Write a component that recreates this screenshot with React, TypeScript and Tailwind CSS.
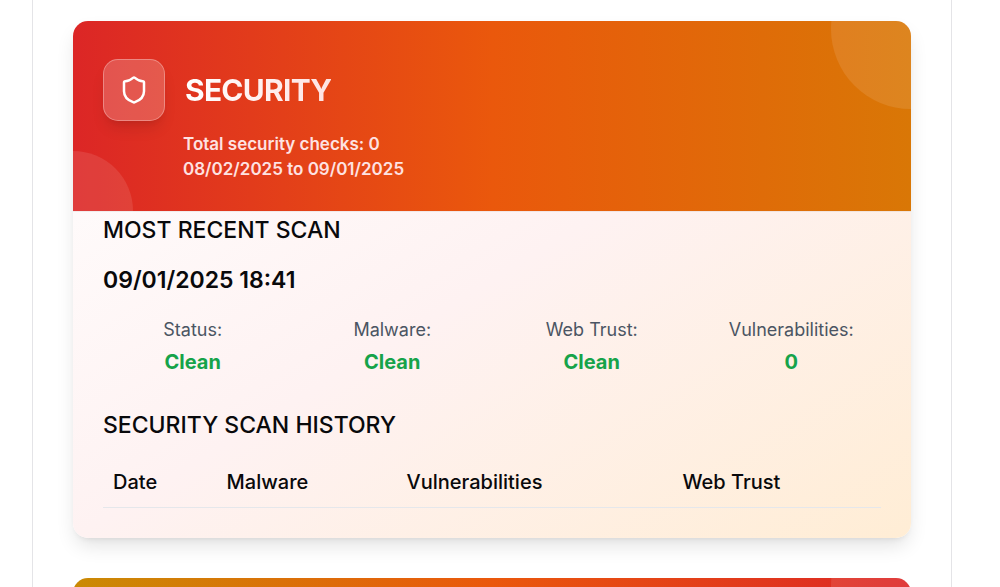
import { Shield } from 'lucide-react';

const results = [
  { label: 'Status:', value: 'Clean' },
  { label: 'Malware:', value: 'Clean' },
  { label: 'Web Trust:', value: 'Clean' },
  { label: 'Vulnerabilities:', value: '0' },
];

const columns = ['Date', 'Malware', 'Vulnerabilities', 'Web Trust'];

function SecurityHeader() {
  return (
    <header className="relative overflow-hidden bg-linear-to-r/srgb from-[#dc2626] via-[#ea580c] to-[#d97706] px-[30px] pt-[38px] pb-[29px]">
      <div className="absolute -top-[72px] -right-20 size-40 rounded-full bg-white/10" />
      <div className="absolute -bottom-[60px] -left-[60px] size-[120px] rounded-full bg-white/10" />
      <div className="relative flex items-center gap-5">
        <div className="flex size-[62px] items-center justify-center rounded-[15px] border border-white/30 bg-white/20 shadow-lg">
          <Shield className="size-[30px] text-white" aria-hidden="true" />
        </div>
        <h2 className="bg-linear-to-r/srgb from-white to-[#fee2e2] bg-clip-text text-[30px] leading-[38px] font-bold tracking-tight text-transparent">
          SECURITY
        </h2>
      </div>
      <div className="relative mt-[11px] ml-20 text-[17px] leading-[25px] font-semibold text-[#fee2e2]">
        <p>Total security checks: 0</p>
        <p>08/02/2025 to 09/01/2025</p>
      </div>
    </header>
  );
}

function SecurityCard() {
  return (
    <section className="overflow-hidden rounded-[15px] bg-linear-to-br/srgb from-white via-[#fef2f2] to-[#ffedd5] shadow-[0_10px_20px_-3px_rgb(0_0_0/0.12),0_4px_6px_-4px_rgb(0_0_0/0.1)]">
      <SecurityHeader />
      <div className="border-t border-black/5 px-[30px] pb-[30px]">
        <h3 className="text-[23px] leading-[36px] font-medium">MOST RECENT SCAN</h3>
        <p className="mt-[14px] text-[23px] leading-[36px] font-semibold">09/01/2025 18:41</p>
        <dl className="mt-[19px] grid grid-cols-4 gap-5 text-center">
          {results.map((result) => (
            <div key={result.label}>
              <dt className="text-[18px] leading-[25px] text-[#4b5563]">{result.label}</dt>
              <dd className="mt-[5px] text-[20px] leading-[30px] font-bold text-[#16a34a]">{result.value}</dd>
            </div>
          ))}
        </dl>
        <h3 className="mt-[30px] text-[23px] leading-[36px] font-medium">SECURITY SCAN HISTORY</h3>
        <table className="mt-[14px] w-full text-left text-[20px] leading-[30px]">
          <thead>
            <tr className="border-b border-[#e5e7eb]">
              {columns.map((column) => (
                <th key={column} scope="col" className="p-[10px] font-medium">
                  {column}
                </th>
              ))}
            </tr>
          </thead>
        </table>
      </div>
    </section>
  );
}

export default function App() {
  return (
    <div className="h-screen overflow-hidden bg-white pr-12 pl-8 font-['Inter',sans-serif] text-[#09090b]">
      <main className="min-h-full border-x border-[#e4e4e7] px-10 pt-[21px]">
        <SecurityCard />
        <section className="relative mt-10 h-[190px] overflow-hidden rounded-t-[15px] bg-linear-to-r/srgb from-[#ca8a04] via-[#ea580c] to-[#dc2626]">
          <div className="absolute -top-[72px] -right-20 size-40 rounded-full bg-white/10" />
        </section>
      </main>
    </div>
  );
}
